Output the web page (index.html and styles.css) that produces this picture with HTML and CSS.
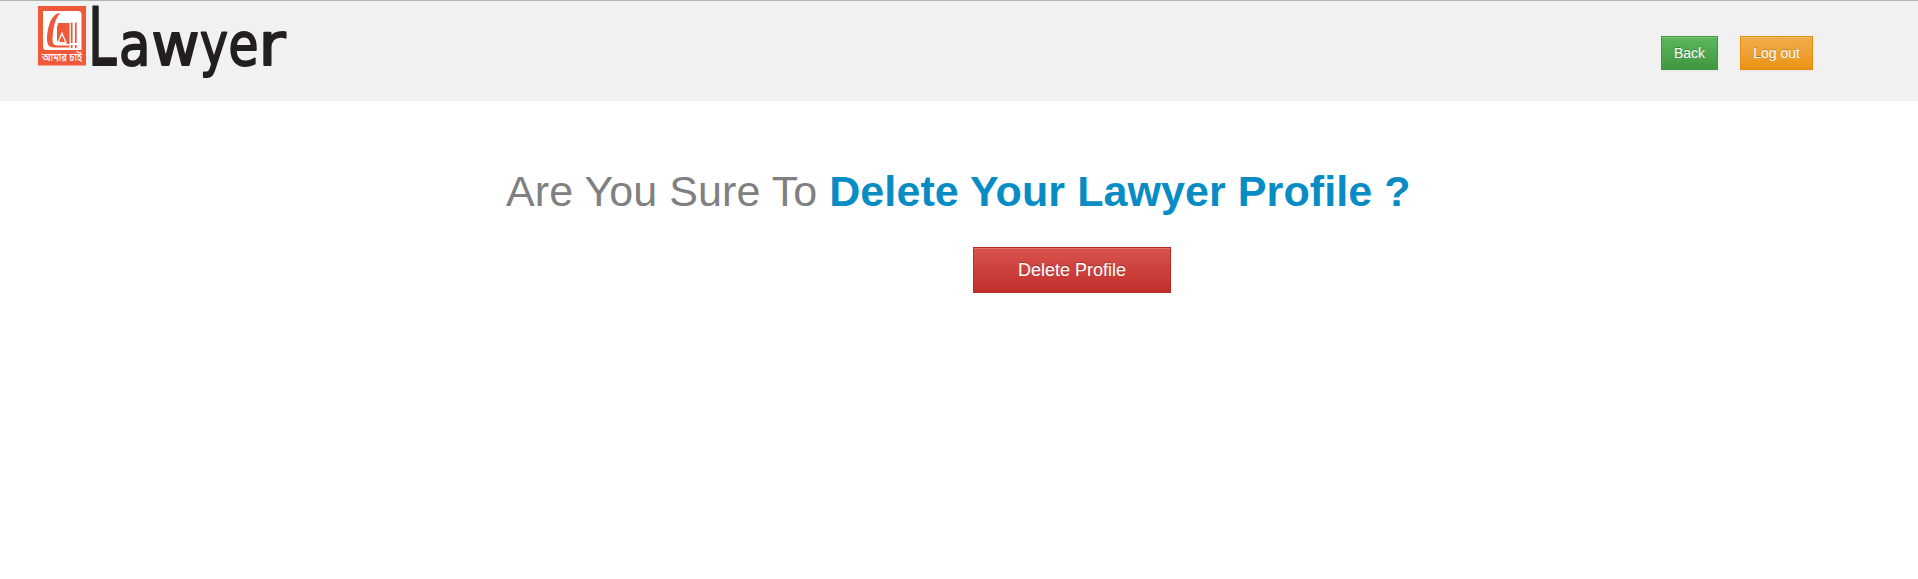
FILE: index.html
```html
<!DOCTYPE html>
<html lang="en">
<head>
<meta charset="utf-8">
<title>Delete Profile</title>
<link rel="stylesheet" href="styles.css">
</head>
<body>
<header class="topbar">
  <svg class="logo" width="250" height="90" viewBox="38 5 250 90">
    <rect x="38" y="6" width="48" height="59.5" fill="#f0583a"/>
    <path d="M43 11H78Q81.500 11 81.500 14.500V50H46.500Q43 50 43 46.500Z" fill="#fff"/>
    <path d="M60.500 13C52 13 47 26 47 40Q47 47.500 54 47.500H69.500V45.500H57Q52 45.500 52.500 39C53 28 55 18 60.500 13Z" fill="#f0583a"/>
    <path d="M58.500 23H69.500V44H66.500L62 34L59 41H57V27Z" fill="#f0583a"/>
    <path d="M62 31.500L67 43.500H57Z" fill="#fff"/>
    <path d="M62 35L65 42H59Z" fill="#f0583a"/>
    <path d="M71.700 22.500V43M71.700 45V48M75.800 22.500V43M75.800 45V48" stroke="#f0583a" stroke-width="1.700"/>
    <text class="tagline" x="42" y="61" textLength="40" lengthAdjust="spacingAndGlyphs">আমার চাই</text>
    <text class="wordmark" y="65"><tspan class="initial" x="88" textLength="28.500" lengthAdjust="spacingAndGlyphs">L</tspan><tspan x="119" textLength="31.500" lengthAdjust="spacingAndGlyphs">a</tspan><tspan x="151.500" textLength="48" lengthAdjust="spacingAndGlyphs">w</tspan><tspan x="200" textLength="28" lengthAdjust="spacingAndGlyphs">y</tspan><tspan x="228.500" textLength="30" lengthAdjust="spacingAndGlyphs">e</tspan><tspan x="258.500" textLength="27" lengthAdjust="spacingAndGlyphs">r</tspan></text>
  </svg>
  <nav class="actions">
    <button class="btn btn-success">Back</button>
    <button class="btn btn-warning">Log out</button>
  </nav>
</header>
<main class="content">
  <h1 class="question">Are You Sure To <strong>Delete Your Lawyer Profile ?</strong></h1>
  <button class="btn btn-danger">Delete Profile</button>
</main>
</body>
</html>
```
FILE: styles.css
```css
* { box-sizing: border-box; }
body {
  margin: 0;
  background: #fff;
  font-family: "Liberation Sans", Arial, sans-serif;
}
.topbar {
  display: flex;
  justify-content: space-between;
  align-items: flex-start;
  height: 101px;
  padding: 4px 105px 0 38px;
  border-top: 1px solid #b0b0b0;
  background: #f1f1f1;
}
.logo { display: block; }
.tagline { font: 400 11px "Noto Sans Bengali", "Noto Sans", sans-serif; fill: #fff; stroke: #fff; stroke-width: .2px; }
.wordmark { font-family: "DejaVu Sans", sans-serif; font-size: 59px; fill: #231f20; stroke: #231f20; stroke-width: 2px; stroke-linejoin: round; }
.initial { font-size: 80px; }
.actions { display: flex; gap: 22px; padding-top: 31px; }
.btn {
  height: 34px;
  padding: 0;
  border: 1px solid;
  color: #fff;
  font-family: inherit;
  font-size: 14px;
  text-align: center;
  text-shadow: 0 -1px 0 rgba(0, 0, 0, .25);
  box-shadow: inset 0 1px 0 rgba(255, 255, 255, .2), 0 1px 2px rgba(0, 0, 0, .05);
}
.btn-success { width: 57px; border-color: #419641; background: linear-gradient(#5cb85c, #419641); }
.btn-warning { width: 73px; border-color: #e38d13; background: linear-gradient(#f0ad4e, #eb9316); }
.content { display: flex; flex-direction: column; align-items: flex-start; padding: 65px 0 0 506px; }
.question {
  margin: 0;
  color: #808080;
  font-size: 43px;
  font-weight: 400;
  letter-spacing: .08px;
  line-height: 50px;
  white-space: nowrap;
}
.question strong { color: #088cc4; }
.btn-danger {
  width: 198px;
  height: 46px;
  margin: 31px 0 0 467px;
  border-color: #b92c28;
  background: linear-gradient(#d9534f, #c12e2a);
  font-size: 18px;
}
```
